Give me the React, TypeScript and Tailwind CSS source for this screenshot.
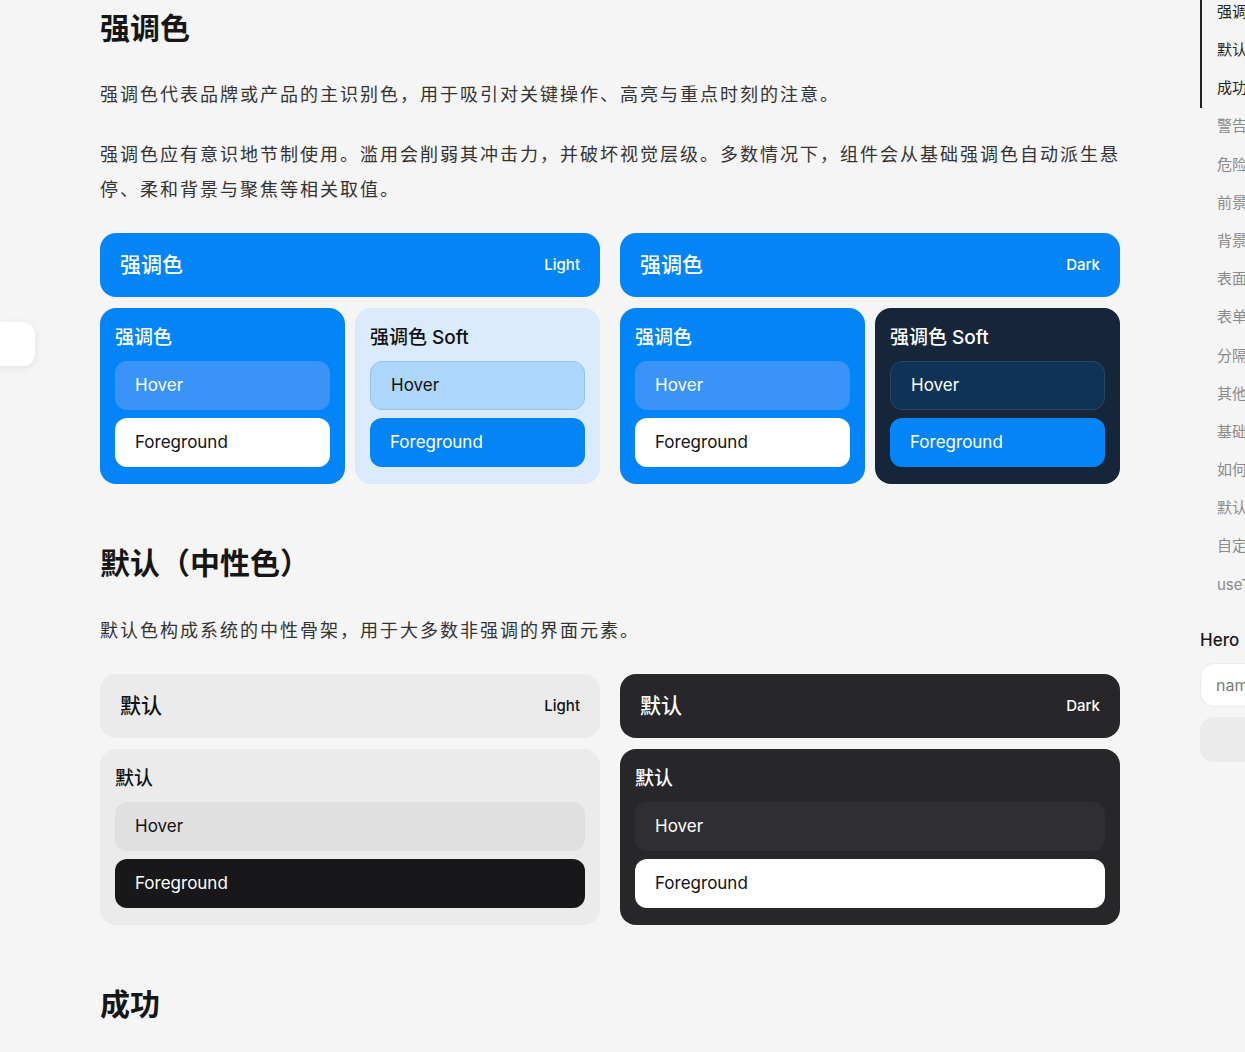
import React from "react";

const FONT = { fontFamily: 'Inter, "Noto Sans CJK SC", "Noto Sans", sans-serif' };

const tocActive = ["强调色", "默认", "成功"];
const tocRest = [
  "警告",
  "危险",
  "前景色",
  "背景色",
  "表面",
  "表单",
  "分隔线",
  "其他",
  "基础色",
  "如何使用",
  "默认主题",
  "自定义",
  "useTheme",
];

function HeaderBar({ title, mode, className }: { title: string; mode: string; className: string }) {
  return (
    <div className={`h-16 rounded-2xl px-5 flex items-center justify-between ${className}`}>
      <span className="text-[21px] font-medium">{title}</span>
      <span className="text-[15px] font-medium">{mode}</span>
    </div>
  );
}

interface SwatchProps {
  label: string;
  card: string;
  hover: string;
  fg: string;
}

function SwatchCard({ label, card, hover, fg }: SwatchProps) {
  return (
    <div className={`rounded-2xl px-[15px] pt-4 pb-[17px] ${card}`}>
      <div className="text-[19px] font-medium leading-[28px] mb-[9px]">{label}</div>
      <div className="flex flex-col gap-2">
        <div className={`h-[49px] rounded-xl px-5 flex items-center text-[17px] ${hover}`}>Hover</div>
        <div className={`h-[49px] rounded-xl px-5 flex items-center text-[17px] ${fg}`}>Foreground</div>
      </div>
    </div>
  );
}

export default function App() {
  return (
    <div className="relative w-full min-h-screen bg-[#f5f5f5] overflow-hidden text-[#1a1a1a]" style={FONT}>
      {/* floating tab peeking from the left edge */}
      <div className="absolute left-0 top-[322px] w-[35px] h-[44px] bg-white rounded-r-xl shadow-[0_2px_8px_rgba(0,0,0,0.08)]" />

      <div className="flex w-[1400px]">
        {/* Main content */}
        <main className="ml-[100px] w-[1020px] shrink-0 pt-[10px] pb-10">
          <h2 className="text-[30px] leading-[36px] font-semibold text-[#161616]">强调色</h2>
          <p className="mt-[31px] text-[18px] leading-[35px] tracking-[2px] text-[#333]">
            强调色代表品牌或产品的主识别色，用于吸引对关键操作、高亮与重点时刻的注意。
          </p>
          <p className="mt-[25px] text-[18px] leading-[35px] tracking-[2px] text-[#333]">
            强调色应有意识地节制使用。滥用会削弱其冲击力，并破坏视觉层级。多数情况下，组件会从基础强调色自动派生悬停、柔和背景与聚焦等相关取值。
          </p>

          <div className="mt-[26px] grid grid-cols-2 gap-5">
            <div className="flex flex-col gap-[11px]">
              <HeaderBar title="强调色" mode="Light" className="bg-[#0485f7] text-white" />
              <div className="grid grid-cols-2 gap-[10px]">
                <SwatchCard
                  label="强调色"
                  card="bg-[#0485f7] text-white"
                  hover="bg-[#3a93f6] text-white"
                  fg="bg-white text-[#111]"
                />
                <SwatchCard
                  label="强调色 Soft"
                  card="bg-[#d9ebfd] text-[#111]"
                  hover="bg-[#acd6fb] text-[#111] border border-[#98c4ea]"
                  fg="bg-[#0485f7] text-white"
                />
              </div>
            </div>
            <div className="flex flex-col gap-[11px]">
              <HeaderBar title="强调色" mode="Dark" className="bg-[#0485f7] text-white" />
              <div className="grid grid-cols-2 gap-[10px]">
                <SwatchCard
                  label="强调色"
                  card="bg-[#0485f7] text-white"
                  hover="bg-[#3a93f6] text-white"
                  fg="bg-white text-[#111]"
                />
                <SwatchCard
                  label="强调色 Soft"
                  card="bg-[#15253a] text-white"
                  hover="bg-[#0f3357] text-white border border-[#2b4565]"
                  fg="bg-[#0485f7] text-white"
                />
              </div>
            </div>
          </div>

          <h2 className="mt-[61px] text-[30px] leading-[36px] font-semibold text-[#161616]">默认（中性色）</h2>
          <p className="mt-[32px] text-[18px] leading-[35px] tracking-[2px] text-[#333]">
            默认色构成系统的中性骨架，用于大多数非强调的界面元素。
          </p>

          <div className="mt-[26px] grid grid-cols-2 gap-5">
            <div className="flex flex-col gap-[11px]">
              <HeaderBar title="默认" mode="Light" className="bg-[#ebebeb] text-[#111]" />
              <SwatchCard
                label="默认"
                card="bg-[#ebebeb] text-[#111]"
                hover="bg-[#e0e0e0] text-[#111]"
                fg="bg-[#18181b] text-white"
              />
            </div>
            <div className="flex flex-col gap-[11px]">
              <HeaderBar title="默认" mode="Dark" className="bg-[#27272a] text-white" />
              <SwatchCard
                label="默认"
                card="bg-[#27272a] text-white"
                hover="bg-[#2f2f33] text-white"
                fg="bg-white text-[#111]"
              />
            </div>
          </div>

          <h2 className="mt-[61px] text-[30px] leading-[36px] font-semibold text-[#161616]">成功</h2>
        </main>

        {/* Table of contents */}
        <aside className="ml-[80px] w-[200px] shrink-0 -mt-[7px]">
          <div className="border-l-2 border-[#222]">
            {tocActive.map((t) => (
              <div key={t} className="h-[38.2px] flex items-center pl-[15px] text-[15px] text-[#222] whitespace-nowrap">
                {t}
              </div>
            ))}
          </div>
          <div className="border-l-2 border-transparent">
            {tocRest.map((t, i) => (
              <div key={i} className="h-[38.2px] flex items-center pl-[15px] text-[15px] text-[#8a8a8a] whitespace-nowrap">
                {t}
              </div>
            ))}
          </div>

          <div className="mt-[24px] text-[17px] font-medium text-[#1a1a1a] leading-6">Hero</div>
          <div className="mt-[11px] h-[44px] rounded-[14px] bg-white border border-[#ececec] flex items-center px-[15px] text-[16px] text-[#7a7a7a]">
            name
          </div>
          <div className="mt-[10px] h-[45px] rounded-[14px] bg-[#ebebeb]" />
        </aside>
      </div>
    </div>
  );
}
